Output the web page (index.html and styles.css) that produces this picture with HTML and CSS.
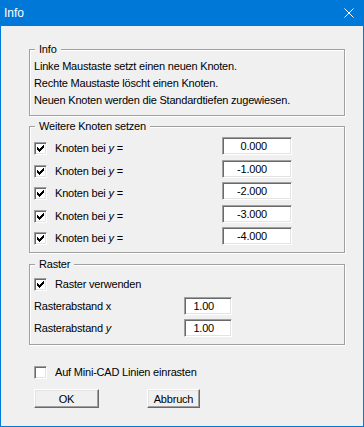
FILE: index.html
```html
<!DOCTYPE html>
<html lang="de">
<head>
    <meta charset="UTF-8">
    <meta name="viewport" content="width=device-width, initial-scale=1.0">
    <title>Info</title>
    <link rel="stylesheet" href="styles.css">
</head>
<body>
    <div class="window">
        <div class="titlebar">
            <span class="title">Info</span>
            <svg class="close" width="10" height="10" viewBox="0 0 10 10">
                <path d="M0.5 0.5 L9.5 9.5 M9.5 0.5 L0.5 9.5" stroke="#fff" stroke-width="1" fill="none"/>
            </svg>
        </div>

        <div class="content">
            <fieldset class="group group-info">
                <legend>Info</legend>
                <p>Linke Maustaste setzt einen neuen Knoten.</p>
                <p>Rechte Maustaste löscht einen Knoten.</p>
                <p>Neuen Knoten werden die Standardtiefen zugewiesen.</p>
            </fieldset>

            <fieldset class="group group-knots">
                <legend>Weitere Knoten setzen</legend>
                <div class="knot-row">
                    <label class="check-label"><span class="check"><svg width="7" height="7" viewBox="0 0 7 7" shape-rendering="crispEdges"><path d="M0 2h1v3H0zM1 3h1v3H1zM2 4h1v3H2zM3 3h1v3H3zM4 2h1v3H4zM5 1h1v3H5zM6 0h1v3H6z" fill="#000"/></svg></span><span>Knoten bei <i>y</i> =</span></label>
                    <div class="field field-knot">0.000</div>
                </div>
                <div class="knot-row">
                    <label class="check-label"><span class="check"><svg width="7" height="7" viewBox="0 0 7 7" shape-rendering="crispEdges"><path d="M0 2h1v3H0zM1 3h1v3H1zM2 4h1v3H2zM3 3h1v3H3zM4 2h1v3H4zM5 1h1v3H5zM6 0h1v3H6z" fill="#000"/></svg></span><span>Knoten bei <i>y</i> =</span></label>
                    <div class="field field-knot">-1.000</div>
                </div>
                <div class="knot-row">
                    <label class="check-label"><span class="check"><svg width="7" height="7" viewBox="0 0 7 7" shape-rendering="crispEdges"><path d="M0 2h1v3H0zM1 3h1v3H1zM2 4h1v3H2zM3 3h1v3H3zM4 2h1v3H4zM5 1h1v3H5zM6 0h1v3H6z" fill="#000"/></svg></span><span>Knoten bei <i>y</i> =</span></label>
                    <div class="field field-knot">-2.000</div>
                </div>
                <div class="knot-row">
                    <label class="check-label"><span class="check"><svg width="7" height="7" viewBox="0 0 7 7" shape-rendering="crispEdges"><path d="M0 2h1v3H0zM1 3h1v3H1zM2 4h1v3H2zM3 3h1v3H3zM4 2h1v3H4zM5 1h1v3H5zM6 0h1v3H6z" fill="#000"/></svg></span><span>Knoten bei <i>y</i> =</span></label>
                    <div class="field field-knot">-3.000</div>
                </div>
                <div class="knot-row">
                    <label class="check-label"><span class="check"><svg width="7" height="7" viewBox="0 0 7 7" shape-rendering="crispEdges"><path d="M0 2h1v3H0zM1 3h1v3H1zM2 4h1v3H2zM3 3h1v3H3zM4 2h1v3H4zM5 1h1v3H5zM6 0h1v3H6z" fill="#000"/></svg></span><span>Knoten bei <i>y</i> =</span></label>
                    <div class="field field-knot">-4.000</div>
                </div>
            </fieldset>

            <fieldset class="group group-raster">
                <legend>Raster</legend>
                <label class="check-label"><span class="check"><svg width="7" height="7" viewBox="0 0 7 7" shape-rendering="crispEdges"><path d="M0 2h1v3H0zM1 3h1v3H1zM2 4h1v3H2zM3 3h1v3H3zM4 2h1v3H4zM5 1h1v3H5zM6 0h1v3H6z" fill="#000"/></svg></span><span>Raster verwenden</span></label>
                <div class="raster-row">
                    <span>Rasterabstand x</span>
                    <div class="field field-raster">1.00</div>
                </div>
                <div class="raster-row">
                    <span>Rasterabstand <i>y</i></span>
                    <div class="field field-raster">1.00</div>
                </div>
            </fieldset>

            <label class="check-label snap"><span class="check"></span><span>Auf Mini-CAD Linien einrasten</span></label>

            <div class="buttons">
                <button class="btn btn-ok">OK</button>
                <button class="btn btn-cancel">Abbruch</button>
            </div>
        </div>
    </div>
</body>
</html>
```

FILE: styles.css
```css
html, body {
    margin: 0;
    padding: 0;
}

body {
    font-family: "Liberation Sans", Arial, sans-serif;
    font-size: 11px;
    letter-spacing: -0.2px;
    color: #000;
    background: #f0f0f0;
}

.window {
    width: 364px;
    height: 427px;
    box-sizing: border-box;
    border: 1px solid #0078d7;
    border-top: 0;
    background: #f0f0f0;
}

.titlebar {
    height: 26px;
    background: #0078d7;
    color: #fff;
    display: flex;
    align-items: center;
    justify-content: space-between;
    padding: 0 9px 0 3px;
    font-size: 12px;
    letter-spacing: 0;
}

.close {
    display: block;
}

.content {
    padding: 17px 18px 0 28px;
}

/* group boxes (etched frame) */
.group {
    margin: 0;
    padding: 0 4px;
    border: 1px solid #a0a0a0;
    box-shadow: inset 1px 1px 0 #fff, 1px 1px 0 #fff;
    min-width: 0;
}

.group legend {
    padding: 0 4px;
    margin-left: 1px;
    line-height: 13px;
    background: #f0f0f0;
}

.group-info {
    padding-top: 2px;
    padding-bottom: 6px;
}

.group-info p {
    margin: 0;
    line-height: 17px;
}

.group-knots {
    margin-top: 4px;
    padding-top: 4px;
    padding-bottom: 2.5px;
}

.knot-row {
    display: grid;
    grid-template-columns: 188px 70px;
    align-items: start;
    height: 22.5px;
}

.knot-row .check-label {
    margin-top: 5px;
}

.check-label {
    display: flex;
    align-items: center;
    gap: 8px;
    line-height: 13px;
}

.check {
    width: 13px;
    height: 13px;
    box-sizing: border-box;
    flex: none;
    background: #fff;
    border: 1px solid;
    border-color: #a0a0a0 #fff #fff #a0a0a0;
    box-shadow: inset 1px 1px 0 #696969, inset -1px -1px 0 #e3e3e3;
    padding: 2px;
}

.check svg {
    display: block;
}

.field {
    height: 18px;
    box-sizing: border-box;
    background: #fff;
    border: 1px solid;
    border-color: #a0a0a0 #fff #fff #a0a0a0;
    box-shadow: inset 1px 1px 0 #696969, inset -1px -1px 0 #e3e3e3;
    line-height: 16px;
    text-align: right;
}

.field-knot {
    padding-right: 24px;
}

.field-raster {
    padding-right: 17px;
}

.group-raster {
    margin-top: 5px;
    padding-top: 7px;
    padding-bottom: 7px;
}

.raster-row {
    display: grid;
    grid-template-columns: 150px 48px;
    align-items: center;
    height: 18px;
    margin-top: 4.5px;
}

.group-raster .check-label + .raster-row {
    margin-top: 5.5px;
}

.snap {
    margin: 21px 0 0 5px;
}

.buttons {
    display: flex;
    gap: 48px;
    margin: 10px 0 0 5px;
}

.btn {
    height: 19px;
    box-sizing: border-box;
    padding: 0;
    font-family: inherit;
    font-size: 11px;
    letter-spacing: -0.2px;
    color: #000;
    background: #f0f0f0;
    border: 1px solid;
    border-color: #fff #696969 #696969 #fff;
    box-shadow: inset -1px -1px 0 #a0a0a0, inset 1px 1px 0 #e3e3e3;
    border-radius: 0;
}

.btn-ok {
    width: 65px;
}

.btn-cancel {
    width: 53px;
}
```
